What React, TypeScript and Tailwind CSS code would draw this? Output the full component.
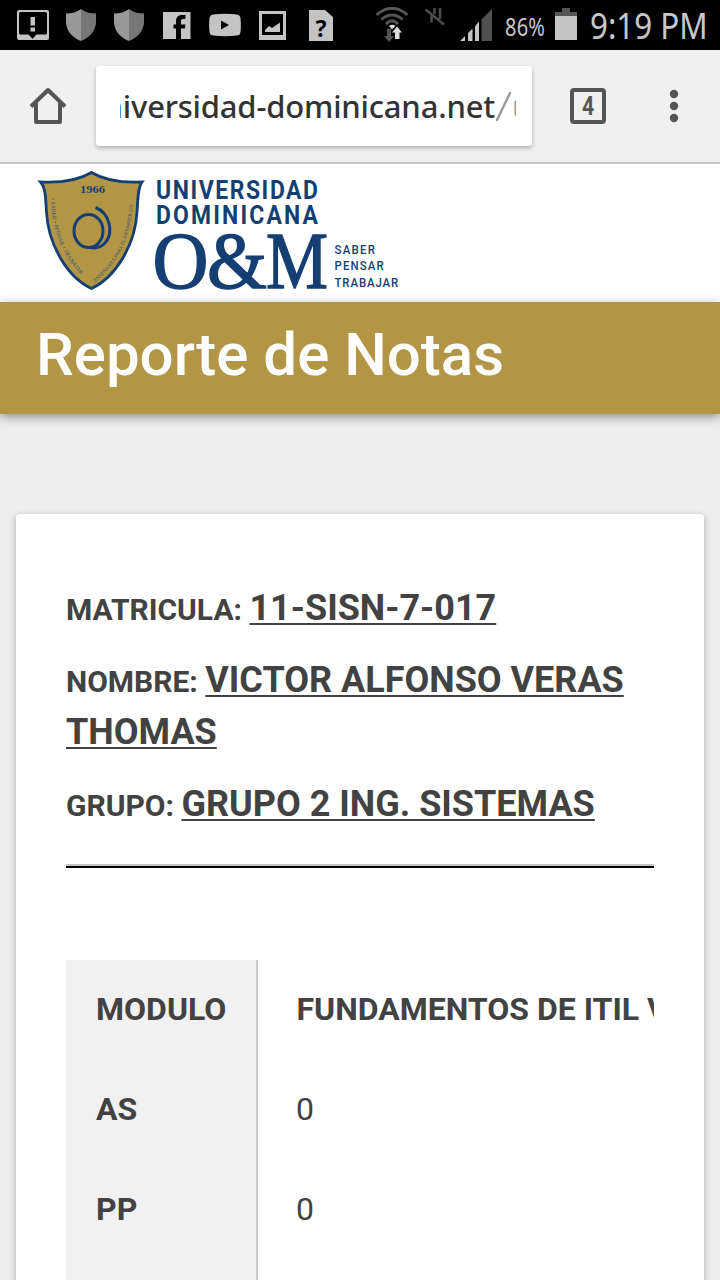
import type { ReactNode } from "react";

type IconProps = { x: number; w: number; className?: string; children: ReactNode };

function StatusIcon({ x, w, className = "", children }: IconProps) {
  return (
    <svg width={w} height={50} viewBox={`${x} 0 ${w} 50`} className={`shrink-0 ${className}`} fill="#c4c4c4">
      {children}
    </svg>
  );
}

function Shield({ className }: { className: string }) {
  return (
    <StatusIcon x={0} w={30} className={className}>
      <path d="M15 9C11 12 6 13.500 0 13.500V22C0 31 7 38 15 41Z" fill="#999" />
      <path d="M15 9C19 12 24 13.500 30 13.500V22C30 31 23 38 15 41Z" fill="#767676" />
    </StatusIcon>
  );
}

function StatusBar() {
  return (
    <div className="flex h-[50px] shrink-0 items-center bg-black text-[#c8c8c8]">
      <StatusIcon x={17} w={32} className="ml-[17px]">
        <path fillRule="evenodd" d="M19 10H47Q49 10 49 12V38Q49 40 47 40H19Q17 40 17 38V12Q17 10 19 10ZM20.500 12Q19 12 19 13.500V33Q19 34.500 20.500 34.500H28.500L32.500 38.700L36.500 34.500H45.500Q47 34.500 47 33V13.500Q47 12 45.500 12Z" />
        <path d="M30.500 17H35V25.500H30.500ZM30.500 27.500H35V31.500H30.500Z" />
      </StatusIcon>
      <Shield className="ml-[17px]" />
      <Shield className="ml-[18px]" />
      <StatusIcon x={163} w={28} className="ml-[19px]">
        <path d="M163 12H190.500V39H163Z" />
        <path fill="#000" d="M176 39V28.500H173.500V24.500H176V21.500C176 17 178.500 15 182 15H185.500V19H183C181.500 19 181 19.800 181 21.200V24.500H185.500L185 28.500H181V39Z" />
      </StatusIcon>
      <StatusIcon x={209} w={32} className="ml-[18px]">
        <path d="M213 14.500Q225 13.200 237 14.500Q240 15 240.500 18Q241.200 25 240.500 32Q240 35 237 35.500Q225 36.800 213 35.500Q210 35 209.500 32Q208.800 25 209.500 18Q210 15 213 14.500Z" />
        <path fill="#000" d="M221 20.500L229 25L221 29.500Z" />
      </StatusIcon>
      <StatusIcon x={259} w={27} className="ml-[18px]">
        <path fillRule="evenodd" d="M259 11H286V40H259ZM262 14V35H283V14Z" />
        <path d="M265 32V30L269 26L272 28L280 22.500V32Z" />
      </StatusIcon>
      <div className="relative ml-[23px] h-[50px] w-[24px]">
        <StatusIcon x={309} w={24}>
          <path d="M309 10H325L333 17V41H309Z" />
        </StatusIcon>
        <span className="absolute inset-0 pt-[6px] text-center font-['Noto_Sans'] text-[23px] leading-[44px] font-bold text-black">?</span>
      </div>
      <StatusIcon x={375} w={34} className="ml-[42px]">
        <g fill="none" stroke="#555" strokeWidth="2.800">
          <path d="M376.500 15Q392 1.500 407.500 15" />
          <path d="M381.500 19.500Q392 10.500 402.500 19.500" />
          <path d="M386 24Q392 17.500 398 24" />
        </g>
        <path d="M389 26Q392 23.500 395.500 26L392 29.500Z" fill="#ddd" />
        <path d="M387 29H391V36H394L389 42L384 36H387Z" fill="#555" />
        <path d="M395 39V32.500H392L397 26.500L402 32.500H399.500V39Z" fill="#ddd" />
      </StatusIcon>
      <StatusIcon x={424} w={22} className="ml-[15px]">
        <g fill="none" stroke="#4d4d4d" strokeWidth="2.500">
          <path d="M425.500 9.500L444 24.500" />
          <path d="M431.500 14V22.500M440 8V19M434.500 8V14" />
        </g>
      </StatusIcon>
      <StatusIcon x={460} w={33} className="ml-[14px]">
        <path d="M460 41L465 36V41ZM468 33L472.500 28.500V41H468ZM475 26.500L479 21.500V41H475Z" />
        <path fill="#505050" d="M481.500 19.500L492 9V41H481.500Z" />
      </StatusIcon>
      <span className="ml-[12px] w-[42px] origin-left scale-x-[0.8] whitespace-nowrap pt-[2px] font-['Noto_Sans',sans-serif] text-[25px] leading-[50px] tracking-[0.300px]">86%</span>
      <StatusIcon x={555} w={22} className="ml-[8px]">
        <path fill="#555" d="M562 8H570V12H577V16H555V12H562Z" />
        <path d="M555 16H577V40H555Z" />
      </StatusIcon>
      <span className="ml-[13px] w-[117px] origin-left scale-x-[0.87] whitespace-nowrap pt-[2px] font-['Noto_Sans',sans-serif] text-[36px] leading-[50px]">9:19 PM</span>
    </div>
  );
}

function BrowserBar() {
  return (
    <div className="flex h-[114px] shrink-0 items-start border-b-2 border-[#c6c6c6] bg-[#f0f0f0] pt-[16px]">
      <svg width="40" height="40" viewBox="28 86 40 40" className="mt-[20px] ml-[28px] shrink-0" fill="none" stroke="#555" strokeWidth="4" strokeLinejoin="round">
        <path d="M31 106.500L48 90L65 106.500" />
        <path d="M36 103V122H60V103" />
      </svg>
      <div className="ml-[28px] h-[80px] w-[436px] rounded-[3px] bg-white px-[24px] shadow-[0_2px_4px_rgba(0,0,0,0.28)]">
        <div className="flex h-[80px] w-[396px] items-center justify-end overflow-hidden whitespace-nowrap font-['Noto_Sans',sans-serif] text-[31px] font-medium text-[#333]">
          <span className="shrink-0 tracking-[-0.180px]">niversidad-dominicana.net</span>
          <svg width="17" height="36" viewBox="0 0 17 36" className="shrink-0" aria-hidden="true">
            <path d="M2 32L15 5" stroke="#999" strokeWidth="2.400" strokeLinecap="round" />
          </svg>
          <span className="w-[4px] shrink-0 overflow-hidden font-normal text-[#999]">u</span>
        </div>
      </div>
      <div className="mt-[22px] ml-[38px] flex h-[36px] w-[36px] items-center justify-center rounded-[4px] border-4 border-[#555] text-[#555]">
        <span className="scale-x-[0.85] font-[Roboto] text-[25px] leading-none font-bold">4</span>
      </div>
      <svg width="10" height="34" viewBox="0 0 10 34" className="mt-[23px] ml-[63px]" fill="#555">
        <circle cx="5" cy="5" r="4.200" />
        <circle cx="5" cy="17" r="4.200" />
        <circle cx="5" cy="29" r="4.200" />
      </svg>
    </div>
  );
}

function Logo() {
  return (
    <svg width="380" height="138" viewBox="30 164 380 138" className="ml-[30px] block" fill="#153f73">
      <path
        d="M40.500 182C60 183 78 180.500 91.500 172.500C105 180.500 123 183 142 182C137.500 188 138 200 137 212C135.500 244 116 277 91.500 288.500C67 277 48 244 46.500 212C45.500 200 46 188 40.500 182Z"
        fill="#b39645"
        stroke="#153f73"
        strokeWidth="2.800"
      />
      <text x="80" y="193" fontFamily="Liberation Serif, serif" fontWeight="bold" fontSize="11" textLength="25" lengthAdjust="spacingAndGlyphs">1966</text>
      <g fill="none" stroke="#153f73" strokeWidth="3">
        <ellipse cx="88.500" cy="231" rx="14.500" ry="16.500" />
        <path d="M95.500 207.500C110 213 114 233 105 243C101 247.500 95 248.500 90 247.500" />
      </g>
      <path id="motto-left" d="M51 198C51 232 65 264 90 282" fill="none" />
      <path id="motto-right" d="M95 282C120 262 132.500 234 133 196" fill="none" />
      <g fontFamily="Liberation Serif, serif" fontSize="5.800" fillOpacity="0.85">
        <text>
          <textPath href="#motto-left">• SABER • PENSAR • TRABAJAR</textPath>
        </text>
        <text fontSize="5.200">
          <textPath href="#motto-right">ENSEÑANZA PARA EL DESARROLLO</textPath>
        </text>
      </g>
      <g fontFamily="Roboto, sans-serif" fontWeight="bold" fontSize="25.500" transform="translate(156 0) scale(0.9 1)">
        <text x="0" y="199" textLength="180">UNIVERSIDAD</text>
        <text x="0" y="224" textLength="180">DOMINICANA</text>
      </g>
      <g fontFamily="Liberation Serif, serif" fontSize="81" stroke="#153f73" strokeWidth="1.400">
        <text x="152.500" y="288" textLength="56" lengthAdjust="spacingAndGlyphs">O</text>
        <text x="207" y="288" textLength="60" lengthAdjust="spacingAndGlyphs">&amp;</text>
        <text x="266" y="288" textLength="62" lengthAdjust="spacingAndGlyphs">M</text>
      </g>
      <g fontFamily="Roboto, sans-serif" fontWeight="500" fontSize="13" transform="translate(334.500 0) scale(0.88 1)">
        <text x="0" y="254" textLength="46">SABER</text>
        <text x="0" y="270.500" textLength="56">PENSAR</text>
        <text x="0" y="287" textLength="72.500">TRABAJAR</text>
      </g>
    </svg>
  );
}

function Field({ label, value }: { label: string; value: string }) {
  return (
    <p className="mb-[20px] text-[30px] leading-[52px] font-bold">
      {label} <span className="text-[36px] leading-none underline decoration-2 underline-offset-[3px] [text-decoration-skip-ink:none]">{value}</span>
    </p>
  );
}

const rows = [
  { label: "MODULO", value: "FUNDAMENTOS DE ITIL V3", heading: true },
  { label: "AS", value: "0", heading: false },
  { label: "PP", value: "0", heading: false },
  { label: "", value: "", heading: false },
];

export default function App() {
  return (
    <div className="flex h-[1280px] w-[720px] flex-col overflow-hidden bg-[#ededed] font-[Roboto]">
      <StatusBar />
      <BrowserBar />
      <div className="h-[138px] shrink-0 bg-white">
        <Logo />
      </div>
      <header className="h-[112px] shrink-0 bg-[#b29545] pl-[36px] text-[60px] leading-[106px] font-medium text-white shadow-[0_3px_10px_rgba(0,0,0,0.4)]">
        Reporte de Notas
      </header>
      <main className="mx-[16px] mt-[100px] h-[820px] shrink-0 rounded-[4px] bg-white px-[50px] pt-[70px] text-[#424242] shadow-[0_2px_6px_rgba(0,0,0,0.3)]">
        <Field label="MATRICULA:" value="11-SISN-7-017" />
        <Field label="NOMBRE:" value="VICTOR ALFONSO VERAS THOMAS" />
        <Field label="GRUPO:" value="GRUPO 2 ING. SISTEMAS" />
        <div className="mt-[32px] h-[4px] border-t-2 border-[#c4c4c4] bg-black" />
        <div className="mt-[92px] overflow-hidden whitespace-nowrap text-[32px]">
          {rows.map((row, index) => (
            <div key={index} className="flex h-[100px]">
              <div className="flex w-[192px] shrink-0 items-center border-r-2 border-[#cacaca] bg-[#f1f1f1] pb-[2px] pl-[30px] font-bold">
                {row.label}
              </div>
              <div className={row.heading ? "flex items-center pb-[2px] pl-[38.500px] font-bold" : "flex items-center pb-[2px] pl-[38px]"}>{row.value}</div>
            </div>
          ))}
        </div>
      </main>
    </div>
  );
}
